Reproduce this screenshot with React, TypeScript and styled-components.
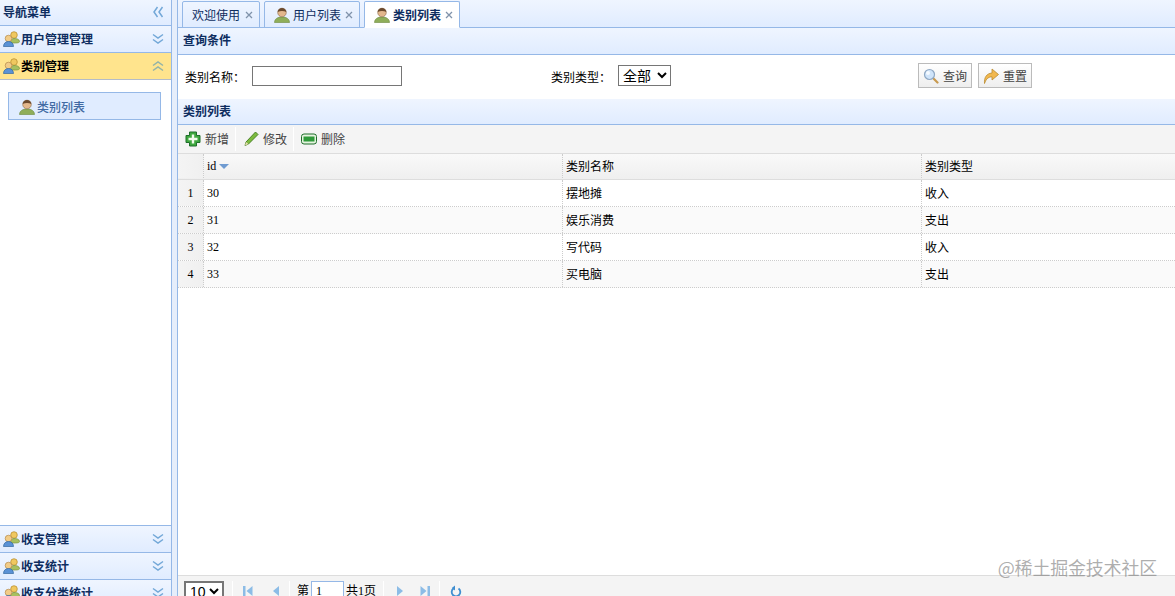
import styled, { createGlobalStyle } from "styled-components";

const GlobalStyle = createGlobalStyle`
  html, body {
    margin: 0;
    padding: 0;
    background: #fff;
    overflow: hidden;
  }
  body {
    font-family: "Liberation Serif", "Noto Sans CJK SC", serif;
    font-size: 12px;
    color: #000;
  }
  * {
    box-sizing: border-box;
  }
`;

const titleGradient = "linear-gradient(to bottom, #eff5ff 0%, #e0ecff 100%)";

const UserIcon = ({ size = 16 }: { size?: number }) => (
  <svg width={size} height={size} viewBox="0 0 16 16">
    <path d="M0.500 15.500c0-3.500 3-5.500 7.500-5.500s7.500 2 7.500 5.500z" fill="#8fae5a" stroke="#6d8a3e" strokeWidth="0.6" />
    <circle cx="8" cy="5.500" r="4.300" fill="#e3b78c" stroke="#8a6a4a" strokeWidth="0.6" />
    <path d="M3.700 5C4 2 6 1 8 1s4 1 4.300 4C10 3.800 6 3.800 3.700 5z" fill="#6b4a2e" />
  </svg>
);

const UsersIcon = () => (
  <svg width="17" height="16" viewBox="0 0 17 16">
    <circle cx="11" cy="4" r="3.300" fill="#f0c860" stroke="#b58a2a" strokeWidth="0.7" />
    <path d="M7.500 12c0-3 1.500-4.500 3.500-4.500S16.500 8 16.500 10.500c0 1-1.500 1.500-4 1.500z" fill="#a8c060" stroke="#7c9440" strokeWidth="0.7" />
    <circle cx="5.500" cy="7.500" r="3.300" fill="#f2cc88" stroke="#b58a4a" strokeWidth="0.7" />
    <path d="M0.500 15.500c0-3 2-5 5-5s5 2 5 5z" fill="#5a92d6" stroke="#34689f" strokeWidth="0.7" />
  </svg>
);

const Chevrons = ({ up = false, left = false, muted = false }: { up?: boolean; left?: boolean; muted?: boolean }) => (
  <svg
    width="12"
    height="12"
    viewBox="0 0 12 12"
    fill="none"
    stroke={muted ? "#93b3a8" : "#73a8d8"}
    strokeWidth="1.500"
    style={{ transform: left ? "rotate(90deg)" : up ? "rotate(180deg)" : undefined }}
  >
    <path d="M1 1.500L6 5l5-3.500M1 6.500L6 10l5-3.500" />
  </svg>
);

const PlusIcon = () => (
  <svg width="16" height="16" viewBox="0 0 16 16">
    <path d="M4.500 1h7v3.500H15v7h-3.500V15h-7v-3.500H1v-7h3.500z" fill="#3fa83f" stroke="#1f6e2a" strokeWidth="1" strokeLinejoin="round" />
    <path d="M6.800 3.500h2.400v3.300h3.300v2.400H9.200v3.300H6.800V9.200H3.500V6.800h3.300z" fill="#f2fbec" />
  </svg>
);

const PencilIcon = () => (
  <svg width="16" height="16" viewBox="0 0 16 16">
    <path d="M12.500 1l2.500 2.500L5.500 13 2 14.500l1-3.500z" fill="#7dbb3e" stroke="#3f7a1e" strokeWidth="0.9" strokeLinejoin="round" />
    <path d="M2 14.500L3 11l2.500 2z" fill="#e8dcb0" />
  </svg>
);

const MinusIcon = () => (
  <svg width="16" height="16" viewBox="0 0 16 16">
    <rect x="0.500" y="3" width="15" height="10" rx="2.500" fill="#e6f4e0" stroke="#1f6e2a" />
    <rect x="2.500" y="5.500" width="11" height="5" fill="#2f9a3a" />
  </svg>
);

const SearchIcon = () => (
  <svg width="16" height="16" viewBox="0 0 16 16">
    <path d="M10 10l4.500 4.500" stroke="#c89a50" strokeWidth="2.200" strokeLinecap="round" />
    <circle cx="6.500" cy="6.500" r="5" fill="#cfe4fa" stroke="#8fa8c4" strokeWidth="1.200" />
    <circle cx="5" cy="5" r="2" fill="#f4faff" />
  </svg>
);

const RedoIcon = () => (
  <svg width="16" height="16" viewBox="0 0 16 16">
    <path
      d="M1.500 15.500C1 9.500 3.500 5.500 9 5V1L15.500 6.500 9 12V8.800C5.500 8.800 3 11 1.500 15.500z"
      fill="#f2b84e"
      stroke="#b98a30"
      strokeWidth="0.8"
      strokeLinejoin="round"
    />
  </svg>
);

const PagerArrow = ({ dir, bar = false }: { dir: "left" | "right"; bar?: boolean }) => (
  <svg width="12" height="12" viewBox="0 0 12 12" fill="#8cbce6" style={{ transform: dir === "right" ? "scaleX(-1)" : undefined }}>
    {bar && <rect x="1" y="1" width="2.500" height="10" />}
    <path d={bar ? "M10.500 1v10L4.500 6z" : "M9 1v10L3 6z"} />
  </svg>
);

const RefreshIcon = () => (
  <svg width="12" height="13" viewBox="0 0 12 13" fill="none">
    <path d="M3.500 3.500a4.300 4.300 0 1 0 5 0" stroke="#3f8ed0" strokeWidth="1.800" />
    <path d="M5 0.500v5L1.800 3z" fill="#3f8ed0" />
  </svg>
);

const CloseX = () => (
  <svg width="8" height="8" viewBox="0 0 8 8" stroke="#8093ab" strokeWidth="1.300">
    <path d="M1 1l6 6M7 1L1 7" />
  </svg>
);

const Page = styled.div`
  position: relative;
  display: flex;
  width: 1175px;
  height: 596px;
  overflow: hidden;
`;

const West = styled.aside`
  width: 172px;
  height: 596px;
  flex: none;
  overflow: hidden;
  border-right: 1px solid #95b8e7;
`;

const WestHead = styled.div`
  height: 26px;
  display: flex;
  align-items: center;
  justify-content: space-between;
  padding: 0 7px 2px 3px;
  background: ${titleGradient};
  border-bottom: 1px solid #95b8e7;
  color: #0e2d5f;
  font-weight: bold;
`;

const NavRow = styled.div<{ $active?: boolean }>`
  height: 27px;
  display: flex;
  align-items: center;
  padding: 0 7px 0 3px;
  background: ${(p) => (p.$active ? "#ffe48d" : titleGradient)};
  border-bottom: 1px solid ${(p) => (p.$active ? "#b4bcc8" : "#95b8e7")};
  color: ${(p) => (p.$active ? "#000" : "#0e2d5f")};
  font-weight: bold;

  span {
    flex: 1;
    margin-left: 1px;
  }
`;

const NavBody = styled.div`
  height: 446px;
  padding: 12px 10px 0 8px;
  background: #fff;
  border-bottom: 1px solid #95b8e7;
`;

const NavItem = styled.div`
  height: 28px;
  display: flex;
  align-items: center;
  gap: 2px;
  padding: 1px 0 0 10px;
  background: #e0ecff;
  border: 1px solid #95b8e7;
  color: #416aa3;
  font-weight: 500;
`;

const Gutter = styled.div`
  width: 6px;
  flex: none;
  background: #e6eefb;
  border-right: 1px solid #95b8e7;
`;

const Center = styled.main`
  flex: 1;
  min-width: 0;
  height: 596px;
  overflow: hidden;
  display: flex;
  flex-direction: column;
`;

const TabStrip = styled.div`
  height: 28px;
  flex: none;
  display: flex;
  align-items: flex-end;
  gap: 4px;
  padding-left: 4px;
  background: ${titleGradient};
  border-bottom: 1px solid #95b8e7;
`;

const Tab = styled.div<{ $active?: boolean; $icon?: boolean }>`
  height: 27px;
  margin-bottom: -1px;
  display: flex;
  align-items: center;
  gap: ${(p) => (p.$icon ? 4 : 5)}px;
  padding: 0 6px 0 9px;
  border: 1px solid #95b8e7;
  border-bottom-color: ${(p) => (p.$active ? "#fff" : "#95b8e7")};
  background: ${(p) => (p.$active ? "#fff" : titleGradient)};
  color: #0e2d5f;
  font-weight: ${(p) => (p.$active ? "bold" : "normal")};
  border-radius: 2px 2px 0 0;

  svg:first-child:not(:last-child) {
    margin-right: -1px;
  }
`;

const PanelTitle = styled.div`
  height: 27px;
  flex: none;
  display: flex;
  align-items: center;
  padding: 0 0 2px 5px;
  background: ${titleGradient};
  border-bottom: 1px solid #95b8e7;
  color: #0e2d5f;
  font-weight: bold;
`;

const ListTitle = styled(PanelTitle)`
  height: 26px;
`;

const SearchForm = styled.form`
  height: 44px;
  flex: none;
  display: flex;
  align-items: center;
  padding: 0 0 3px 7px;
  background: #fff;
`;

const FormCell = styled.div<{ $width: number }>`
  width: ${(p) => p.$width}px;
  flex: none;
  display: flex;
  align-items: center;
`;

const FieldLabel = styled.label<{ $width: number }>`
  width: ${(p) => p.$width}px;
  flex: none;
  padding-top: 3px;
`;

const TextInput = styled.input`
  width: 150px;
  height: 20px;
  border: 1px solid #767676;
  padding: 0 2px;
  background: #fff;
`;

const TypeSelect = styled.select`
  width: 53px;
  height: 21px;
  font-family: "Liberation Sans", "Noto Sans CJK SC", sans-serif;
  font-size: 14px;
  line-height: 1;
  background: #fff;
  border: 1px solid #767676;
  border-radius: 0;
  padding: 0;
`;

const LinkButton = styled.button`
  height: 25px;
  width: 54px;
  display: inline-flex;
  align-items: center;
  gap: 4px;
  margin-right: 6px;
  padding: 0 0 0 4px;
  border: 1px solid #bbb;
  background: linear-gradient(to bottom, #fff 0%, #eee 100%);
  color: #444;
  font: inherit;
`;

const Toolbar = styled.div`
  height: 29px;
  flex: none;
  display: flex;
  align-items: center;
  padding-left: 7px;
  background: #f4f4f4;
  border-bottom: 1px solid #ddd;
`;

const ToolButton = styled.div`
  display: flex;
  align-items: center;
  gap: 4px;
  color: #444;
`;

const ToolSep = styled.div<{ $left: number; $right: number }>`
  width: 1px;
  height: 24px;
  margin: 0 ${(p) => p.$right}px 0 ${(p) => p.$left}px;
  background: #ddd;
  border-right: 1px solid #fff;
`;

const Grid = styled.div`
  height: 421px;
  flex: none;
  background: #fff;
  overflow: hidden;
`;

const Row = styled.div<{ $head?: boolean; $alt?: boolean }>`
  display: grid;
  grid-template-columns: 26px 359px 359px 1fr;
  height: ${(p) => (p.$head ? 26 : 27)}px;
  padding-bottom: ${(p) => (p.$head ? 1 : 0)}px;
  background: ${(p) => (p.$head ? "linear-gradient(to bottom, #f9f9f9 0%, #efefef 100%)" : p.$alt ? "#fafafa" : "#fff")};
  border-bottom: 1px ${(p) => (p.$head ? "solid" : "dotted")} ${(p) => (p.$head ? "#ddd" : "#ccc")};
  color: #000;
`;

const Cell = styled.div`
  display: flex;
  align-items: center;
  gap: 3px;
  padding-left: 3px;
  border-right: 1px dotted #ccc;

  &:last-child {
    border-right: 0;
  }
`;

const RowNumber = styled.div`
  display: flex;
  align-items: center;
  justify-content: center;
  background: linear-gradient(to right, #f4f4f4, #f0f0f0);
  border-right: 1px dotted #ccc;
  font-size: 12px;
`;

const SortCaret = styled.i`
  width: 0;
  height: 0;
  border-left: 5px solid transparent;
  border-right: 5px solid transparent;
  border-top: 5px solid #6f9bd1;
  margin-top: 1px;
`;

const Pager = styled.div`
  height: 40px;
  flex: none;
  display: flex;
  align-items: flex-start;
  padding: 5px 0 0 6px;
  background: #f4f4f4;
  border-top: 1px solid #ddd;
`;

const PageSize = styled.select`
  width: 40px;
  height: 21px;
  font-family: "Liberation Sans", sans-serif;
  font-size: 14px;
  padding: 0;
  background: #fff;
  border: 2px solid #767676;
  border-radius: 0;
`;

const PagerSep = styled.div<{ $left: number; $right: number }>`
  width: 1px;
  height: 24px;
  margin: 0 ${(p) => p.$right}px 0 ${(p) => p.$left}px;
  background: #ccc;
  border-right: 1px solid #fff;
`;

const PagerIcon = styled.div<{ $right?: number }>`
  display: flex;
  align-items: center;
  height: 20px;
  margin-right: ${(p) => p.$right ?? 0}px;
`;

const PagerText = styled.span`
  height: 20px;
  line-height: 20px;
  color: #000;
`;

const PageInput = styled.input`
  width: 33px;
  height: 20px;
  margin: 0 2px;
  padding: 0 4px;
  border: 1px solid #95b8e7;
  font: inherit;
  background: #fff;
`;

const Watermark = styled.div`
  position: absolute;
  right: 18px;
  top: 556px;
  font-family: "Noto Sans CJK SC", sans-serif;
  font-size: 18px;
  line-height: 22px;
  letter-spacing: -0.2px;
  color: rgba(120, 120, 120, 0.6);
  white-space: nowrap;
`;

const rows = [
  { id: 30, name: "摆地摊", type: "收入" },
  { id: 31, name: "娱乐消费", type: "支出" },
  { id: 32, name: "写代码", type: "收入" },
  { id: 33, name: "买电脑", type: "支出" },
];

const App = () => {
  return (
    <>
      <GlobalStyle />
      <Page>
        <West>
          <WestHead>
            导航菜单
            <Chevrons left />
          </WestHead>
          <NavRow>
            <UsersIcon />
            <span>用户管理管理</span>
            <Chevrons />
          </NavRow>
          <NavRow $active>
            <UsersIcon />
            <span>类别管理</span>
            <Chevrons up muted />
          </NavRow>
          <NavBody>
            <NavItem>
              <UserIcon />
              类别列表
            </NavItem>
          </NavBody>
          <NavRow>
            <UsersIcon />
            <span>收支管理</span>
            <Chevrons />
          </NavRow>
          <NavRow>
            <UsersIcon />
            <span>收支统计</span>
            <Chevrons />
          </NavRow>
          <NavRow>
            <UsersIcon />
            <span>收支分类统计</span>
            <Chevrons />
          </NavRow>
        </West>
        <Gutter />
        <Center>
          <TabStrip>
            <Tab>
              欢迎使用
              <CloseX />
            </Tab>
            <Tab $icon>
              <UserIcon />
              用户列表
              <CloseX />
            </Tab>
            <Tab $icon $active>
              <UserIcon />
              类别列表
              <CloseX />
            </Tab>
          </TabStrip>
          <PanelTitle>查询条件</PanelTitle>
          <SearchForm>
            <FormCell $width={366}>
              <FieldLabel $width={67}>类别名称：</FieldLabel>
              <TextInput />
            </FormCell>
            <FormCell $width={367}>
              <FieldLabel $width={67}>类别类型：</FieldLabel>
              <TypeSelect defaultValue="all">
                <option value="all">全部</option>
              </TypeSelect>
            </FormCell>
            <LinkButton type="button">
              <SearchIcon />
              查询
            </LinkButton>
            <LinkButton type="button">
              <RedoIcon />
              重置
            </LinkButton>
          </SearchForm>
          <ListTitle>类别列表</ListTitle>
          <Toolbar>
            <ToolButton>
              <PlusIcon />
              新增
            </ToolButton>
            <ToolSep $left={6} $right={7} />
            <ToolButton>
              <PencilIcon />
              修改
            </ToolButton>
            <ToolSep $left={6} $right={7} />
            <ToolButton>
              <MinusIcon />
              删除
            </ToolButton>
          </Toolbar>
          <Grid>
            <Row $head>
              <RowNumber />
              <Cell>
                id
                <SortCaret />
              </Cell>
              <Cell>类别名称</Cell>
              <Cell>类别类型</Cell>
            </Row>
            {rows.map((row, i) => (
              <Row key={row.id} $alt={i % 2 === 1}>
                <RowNumber>{i + 1}</RowNumber>
                <Cell>{row.id}</Cell>
                <Cell>{row.name}</Cell>
                <Cell>{row.type}</Cell>
              </Row>
            ))}
          </Grid>
          <Pager>
            <PageSize defaultValue="10">
              <option value="10">10</option>
            </PageSize>
            <PagerSep $left={8} $right={9} />
            <PagerIcon $right={16}>
              <PagerArrow dir="left" bar />
            </PagerIcon>
            <PagerIcon>
              <PagerArrow dir="left" />
            </PagerIcon>
            <PagerSep $left={7} $right={7} />
            <PagerText>第</PagerText>
            <PageInput defaultValue="1" />
            <PagerText>共1页</PagerText>
            <PagerSep $left={7} $right={10} />
            <PagerIcon $right={13}>
              <PagerArrow dir="right" />
            </PagerIcon>
            <PagerIcon>
              <PagerArrow dir="right" bar />
            </PagerIcon>
            <PagerSep $left={8} $right={10} />
            <PagerIcon>
              <RefreshIcon />
            </PagerIcon>
          </Pager>
        </Center>
        <Watermark>@稀土掘金技术社区</Watermark>
      </Page>
    </>
  );
};

export default App;
